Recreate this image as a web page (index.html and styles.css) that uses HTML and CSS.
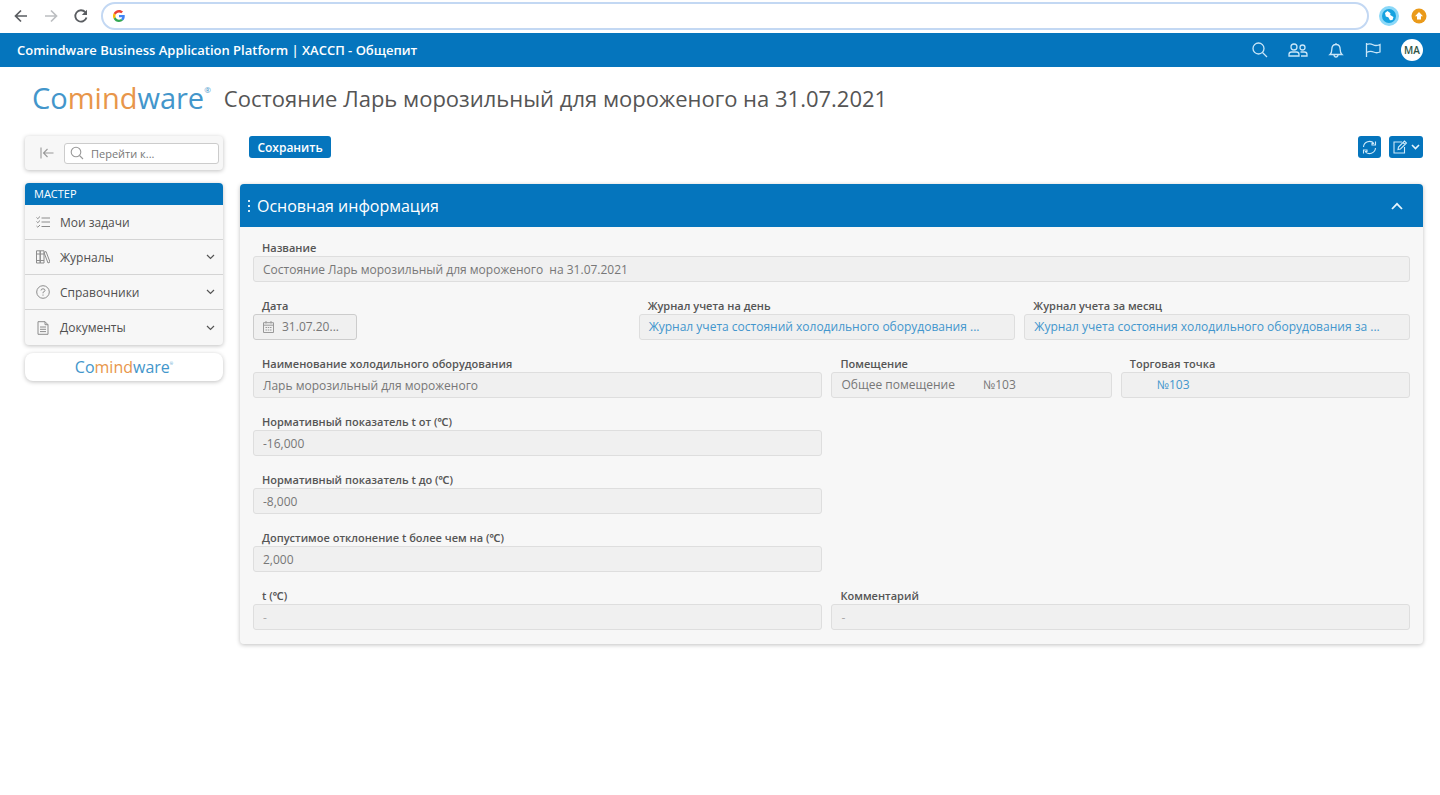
FILE: index.html
```html
<!DOCTYPE html>
<html lang="ru">
<head>
<meta charset="utf-8">
<meta name="viewport" content="width=device-width, initial-scale=1">
<title>ХАССП - Общепит</title>
<link rel="stylesheet" href="styles.css">
</head>
<body>
<div class="browser">
  <button class="nav" aria-label="Назад"><svg width="16" height="16" viewBox="0 0 16 16"><path d="M14 8H2.500M8 2.500L2.500 8L8 13.500" stroke="#5a5d61" stroke-width="1.700"/></svg></button>
  <button class="nav" aria-label="Вперёд"><svg width="16" height="16" viewBox="0 0 16 16"><path d="M2 8H13.500M8 2.500L13.500 8L8 13.500" stroke="#bcbec1" stroke-width="1.700"/></svg></button>
  <button class="nav" aria-label="Обновить"><svg width="16" height="16" viewBox="0 0 16 16"><path d="M13.500 9.500A5.700 5.700 0 1 1 12.300 4.200" stroke="#5a5d61" stroke-width="1.800"/><path d="M14 1.800V7H8.800Z" fill="#5a5d61"/></svg></button>
  <div class="address">
    <svg width="12" height="12" viewBox="0 0 48 48"><path fill="#ea4335" d="M24 9.500c3.500 0 6.700 1.200 9.200 3.600l6.900-6.900C35.900 2.400 30.500 0 24 0 14.600 0 6.500 5.400 2.600 13.200l8 6.200C12.400 13.700 17.700 9.500 24 9.500z"/><path fill="#4285f4" d="M47 24.600c0-1.600-.2-3.100-.4-4.600H24v9h12.900c-.6 3-2.300 5.500-4.800 7.200l7.700 6C44.400 38 47 32 47 24.600z"/><path fill="#fbbc05" d="M10.500 28.600a14.500 14.500 0 0 1 0-9.200l-8-6.200a24 24 0 0 0 0 21.600z"/><path fill="#34a853" d="M24 48c6.500 0 11.900-2.100 15.900-5.800l-7.700-6c-2.200 1.400-4.900 2.300-8.200 2.300-6.300 0-11.600-4.200-13.500-9.900l-8 6.200C6.500 42.600 14.600 48 24 48z"/></svg>
    <input type="text" aria-label="Адресная строка">
  </div>
  <button class="ext" aria-label="Расширение"><svg width="20" height="20" viewBox="0 0 20 20"><circle cx="10" cy="10" r="10" fill="#8bd8f8"/><circle cx="10" cy="10" r="7" fill="#16a3e0"/><path d="M6 7L8.500 5L11.500 7.200L11.200 9L14.500 11L13.500 14L11 14.300L9.300 11.300L6.800 10.500Z" fill="#fff"/></svg></button>
  <button class="ext" aria-label="Обновление"><svg width="16" height="16" viewBox="0 0 16 16"><circle cx="8" cy="8" r="7.500" fill="#ea9a1a"/><path d="M8 4L12 8.300H10V11.500H6V8.300H4Z" fill="#fff"/></svg></button>
</div>

<header class="topbar">
  <span class="topbar-title">Comindware Business Application Platform | ХАССП - Общепит</span>
  <button aria-label="Поиск"><svg width="18" height="18" viewBox="0 0 18 18"><circle cx="7.500" cy="7.500" r="5.500"/><path d="M11.500 11.500L16 16"/></svg></button>
  <button aria-label="Пользователи"><svg width="20" height="18" viewBox="0 0 20 18"><circle cx="6" cy="6" r="3"/><circle cx="14.500" cy="6.500" r="2.500"/><path d="M1 15V13.500Q1 11 3.500 11H8.500Q11 11 11 13.500V15ZM12.500 11H16.500Q19 11 19 13.500V15H13"/></svg></button>
  <button aria-label="Уведомления"><svg width="18" height="18" viewBox="0 0 18 18"><path d="M3 13.500Q4.800 12 4.800 8.500Q4.800 3.500 9 3.500Q13.200 3.500 13.200 8.500Q13.200 12 15 13.500ZM9 2V3.500M7 13.500Q7 16 9 16Q11 16 11 13.500"/></svg></button>
  <button aria-label="Флаги"><svg width="18" height="18" viewBox="0 0 18 18"><path d="M2.500 2V16M2.500 3.500Q6 2 9 3.700T16 3.500V11Q12.500 12.500 9.500 11T2.500 11.500"/></svg></button>
  <button class="avatar" aria-label="Профиль">МА</button>
</header>

<div class="heading">
  <div class="logo">Co<span>mind</span>ware<sup>®</sup></div>
  <h1>Состояние Ларь морозильный для мороженого на 31.07.2021</h1>
</div>

<div class="layout">
  <aside class="sidebar">
    <div class="finder">
      <button class="collapse" aria-label="Свернуть"><svg width="14" height="12" viewBox="0 0 14 12"><path d="M1 0.500V11.500M13.500 6H3.500M7.500 2L3.500 6L7.500 10"/></svg></button>
      <label class="search">
        <svg width="14" height="14" viewBox="0 0 14 14"><circle cx="6" cy="6" r="4.800"/><path d="M9.500 9.500L13 13"/></svg>
        <input type="text" placeholder="Перейти к..." aria-label="Перейти к">
      </label>
    </div>
    <nav class="menu">
      <h2>МАСТЕР</h2>
      <a href="#"><svg class="icon" width="14" height="14" viewBox="0 0 14 14"><path d="M0.500 2.500L1.800 3.700L4 1.500M0.500 6.500L1.800 7.700L4 5.500M0.500 11L1.800 12.200L4 10M5.500 3H14M5.500 7H14M5.500 11.500H14"/></svg>Мои задачи</a>
      <a href="#"><svg class="icon" width="14" height="14" viewBox="0 0 14 14"><path d="M0.500 0.800H4.200V13H0.500ZM4.200 0.800H8V13H4.200ZM0.500 4H8M0.500 10.500H8M8 2.500L10 1.500L14 12L12 13Z"/></svg>Журналы<svg class="chev" width="9" height="6" viewBox="0 0 9 6"><path d="M1 1L4.500 4.500L8 1"/></svg></a>
      <a href="#"><svg class="icon" width="14" height="14" viewBox="0 0 14 14"><circle cx="7" cy="7" r="6.300"/><path d="M5 5.500Q5 3.800 7 3.800T9 5.500Q9 6.500 7 7.300V8.300M7 9.500V10.700"/></svg>Справочники<svg class="chev" width="9" height="6" viewBox="0 0 9 6"><path d="M1 1L4.500 4.500L8 1"/></svg></a>
      <a href="#"><svg class="icon" width="14" height="14" viewBox="0 0 14 14"><path d="M2 0.700H9L12 3.700V13.300H2ZM9 0.700V3.700H12M4 6H10M4 8.300H10M4 10.600H10"/></svg>Документы<svg class="chev" width="9" height="6" viewBox="0 0 9 6"><path d="M1 1L4.500 4.500L8 1"/></svg></a>
    </nav>
    <div class="brand"><div class="logo logo-small">Co<span>mind</span>ware<sup>®</sup></div></div>
  </aside>

  <main>
    <div class="toolbar">
      <button class="btn save">Сохранить</button>
      <button class="btn refresh" aria-label="Обновить"><svg width="15" height="15" viewBox="0 0 15 15"><path d="M1.500 7A6 6 0 0 1 12 3.500M13.500 8A6 6 0 0 1 3 11.500M13.500 1.500V5H10V3.500L12 3.500M1.500 13.500V10H5V11.500L3 11.500"/></svg></button>
      <button class="btn edit" aria-label="Изменить"><svg width="14" height="14" viewBox="0 0 14 14"><path d="M9 2H1V13H11.500V7M5 9.500L5.500 7L11.500 1L13.500 3L7.500 9ZM10 2.500L12 4.500"/></svg><svg width="9" height="6" viewBox="0 0 9 6"><path class="bold" d="M1 1L4.500 4.500L8 1"/></svg></button>
    </div>

    <section class="card">
      <header class="card-head">
        <svg width="4" height="12" viewBox="0 0 4 12"><path d="M1 0H3V2H1ZM1 5H3V7H1ZM1 10H3V12H1Z" fill="#d5ebf8"/></svg>
        <h2>Основная информация</h2>
        <button aria-label="Свернуть раздел"><svg width="12" height="8" viewBox="0 0 12 8"><path d="M1 7L6 1.800L11 7"/></svg></button>
      </header>
      <form class="fields">
        <div class="field span-12 last"><label for="name">Название</label><input id="name" readonly value="Состояние Ларь морозильный для мороженого  на 31.07.2021"></div>

        <div class="field span-4"><label for="date">Дата</label>
          <div class="date"><svg width="11" height="12" viewBox="0 0 11 12"><path d="M0.500 1.700H10.500V11.500H0.500ZM0.500 4.200H10.500M3 0V2.500M8 0V2.500"/><path d="M2.500 6.500H8.500M2.500 9H8.500" stroke-dasharray="1.500 0.750"/></svg><input id="date" readonly value="31.07.20..."></div>
        </div>
        <div class="field span-4"><span class="label">Журнал учета на день</span><div class="box"><a href="#">Журнал учета состояний холодильного оборудования ...</a></div></div>
        <div class="field span-4 last"><span class="label">Журнал учета за месяц</span><div class="box"><a href="#">Журнал учета состояния холодильного оборудования за ...</a></div></div>

        <div class="field span-6"><label for="equip">Наименование холодильного оборудования</label><input id="equip" readonly value="Ларь морозильный для мороженого"></div>
        <div class="field span-3"><label for="room">Помещение</label><output class="box pair" id="room"><span>Общее помещение</span><span>№103</span></output></div>
        <div class="field span-3 last"><span class="label">Торговая точка</span><div class="box inset"><a href="#">№103</a></div></div>

        <div class="field alone"><label for="tmin">Нормативный показатель t от (℃)</label><input id="tmin" readonly value="-16,000"></div>
        <div class="field alone"><label for="tmax">Нормативный показатель t до (℃)</label><input id="tmax" readonly value="-8,000"></div>
        <div class="field alone"><label for="dev">Допустимое отклонение t более чем на (℃)</label><input id="dev" readonly value="2,000"></div>

        <div class="field alone"><label for="temp">t (℃)</label><input id="temp" class="empty" readonly value="-"></div>
        <div class="field span-6 last"><label for="comment">Комментарий</label><input id="comment" class="empty" readonly value="-"></div>
      </form>
    </section>
  </main>
</div>
</body>
</html>
```

FILE: styles.css
```css
* { box-sizing: border-box; }

body {
  margin: 0;
  background: #fff;
  color: #555;
  font-family: "Open Sans", "Noto Sans", sans-serif;
  font-size: 12px;
}

button, input { font: inherit; color: inherit; }
button { border: 0; padding: 0; background: none; display: flex; align-items: center; justify-content: center; }
svg { display: block; flex: none; fill: none; }
h1, h2 { margin: 0; font-weight: 400; }
a { text-decoration: none; }

/* Browser bar */
.browser { display: flex; align-items: center; height: 33px; padding: 0 13px 1px; }
.nav { width: 16px; margin-right: 14px; }
.nav:nth-child(3) { margin-right: 12px; }
.address {
  flex: 1;
  display: flex;
  align-items: center;
  height: 28px;
  padding: 0 10px;
  border: 2px solid #c3d8f3;
  border-radius: 14px;
}
.address input { flex: 1; margin-left: 8px; border: 0; outline: 0; }
.ext { margin-left: 10px; }
.ext:last-child { margin-left: 12px; }

/* Application bar */
.topbar {
  display: flex;
  align-items: center;
  gap: 19px;
  height: 34px;
  padding: 0 17px;
  background: #0575bd;
  color: #fff;
}
.topbar-title { flex: 1; font-size: 13px; font-weight: 600; }
.topbar svg { stroke: #c9e6f8; stroke-width: 1.3; }
.topbar .avatar {
  width: 22px;
  height: 22px;
  border-radius: 50%;
  background: #fff;
  color: #2f5545;
  font-size: 10px;
  font-weight: 600;
}

/* Page heading */
.heading { display: flex; align-items: center; height: 61px; padding-left: 32px; }
.heading h1 { margin-left: 13px; font-size: 22px; line-height: 30px; }
.logo { color: #4396cb; font-size: 29px; line-height: 32px; white-space: nowrap; }
.logo span { color: #e8964a; }
.logo sup { font-size: 8px; line-height: 8px; vertical-align: 16px; }
.logo-small { font-size: 16px; line-height: 20px; }
.logo-small sup { font-size: 4px; line-height: 4px; vertical-align: 8px; }

.layout { display: flex; gap: 17px; padding: 8px 17px 24px 25px; }

/* Sidebar */
.sidebar { width: 198px; flex: none; }
.finder, .menu, .brand { box-shadow: 0 1px 4px rgba(0, 0, 0, .25); }
.finder {
  display: flex;
  align-items: center;
  gap: 10px;
  height: 34px;
  padding: 0 4px 0 15px;
  border-radius: 4px;
  background: #f7f7f7;
}
.collapse svg { stroke: #999; stroke-width: 1.1; }
.search {
  flex: 1;
  min-width: 0;
  display: flex;
  align-items: center;
  gap: 7px;
  height: 21px;
  padding: 0 5px;
  border: 1px solid #ccc;
  border-radius: 3px;
  background: #fff;
}
.search svg { stroke: #999; stroke-width: 1.1; }
.search input { flex: 1; min-width: 0; padding: 0; border: 0; outline: 0; font-size: 11px; }
.search input::placeholder { color: #777; opacity: 1; }

.menu { margin-top: 13px; border-radius: 4px; background: #f7f7f7; overflow: hidden; }
.menu h2 { padding-left: 9px; background: #0575bd; color: #fff; font-size: 11px; font-weight: 500; line-height: 22px; }
.menu a {
  display: flex;
  align-items: center;
  height: 35px;
  padding: 0 8px 0 11px;
  border-bottom: 1px solid #d4d4d4;
  color: #505050;
}
.menu a:last-child { border-bottom: 0; }
.icon { margin-right: 10px; stroke: #8c8c8c; stroke-width: 1; }
.chev { margin-left: auto; stroke: #555; stroke-width: 1.2; }
.brand { display: flex; justify-content: center; align-items: center; height: 28px; margin-top: 8px; border-radius: 8px; }

/* Toolbar */
main { flex: 1; min-width: 0; }
.toolbar { display: flex; gap: 8px; padding-left: 7px; }
.btn { height: 22px; border-radius: 3px; background: #0575bd; color: #fff; }
.btn svg { stroke: #cdeafa; stroke-width: 1.1; }
.btn .bold { stroke: #e6f5fd; stroke-width: 1.6; }
.save { width: 82px; margin: 0 auto 0 2px; font-weight: 600; }
.refresh { width: 23px; }
.edit { width: 34px; gap: 4px; }

/* Form card */
.card { margin-top: 26px; border-radius: 4px; background: #f7f7f7; box-shadow: 0 1px 4px rgba(0, 0, 0, .25); }
.card-head {
  display: flex;
  align-items: center;
  height: 43px;
  padding: 0 20px 0 7px;
  border-radius: 4px 4px 0 0;
  background: #0575bd;
  color: #fff;
}
.card-head h2 { flex: 1; margin-left: 6px; font-size: 16px; font-weight: 500; }
.card-head button svg { stroke: #e6f5fd; stroke-width: 1.8; }

.fields { display: grid; grid-template-columns: repeat(12, 1fr); row-gap: 16px; padding: 13px 13px 14px; }
.field { min-width: 0; padding-right: 9px; }
.last { padding-right: 0; }
.span-12 { grid-column: span 12; }
.span-6 { grid-column: span 6; }
.span-4 { grid-column: span 4; }
.span-3 { grid-column: span 3; }
.alone { grid-column: 1 / span 6; }
.field label, .label { display: block; padding-left: 9px; font-size: 11px; font-weight: 600; line-height: 16px; }
.field > input, .box, .date {
  display: block;
  width: 100%;
  height: 26px;
  padding: 0 9px;
  border: 1px solid #dedede;
  border-radius: 3px;
  background: #f0f0f0;
  color: #777;
  line-height: 24px;
  outline: 0;
}
.box { white-space: nowrap; overflow: hidden; }
.box a { color: #4296cd; }
.field > .empty { color: #aaa; }
.field > .pair { display: flex; gap: 28px; }
.field > .inset { padding-left: 35px; }
.field > .date { display: flex; align-items: center; gap: 8px; width: 104px; border-color: #ccc; }
.date svg { stroke: #999; stroke-width: 1; }
.date input { flex: 1; min-width: 0; padding: 0; border: 0; outline: 0; background: none; }
```
